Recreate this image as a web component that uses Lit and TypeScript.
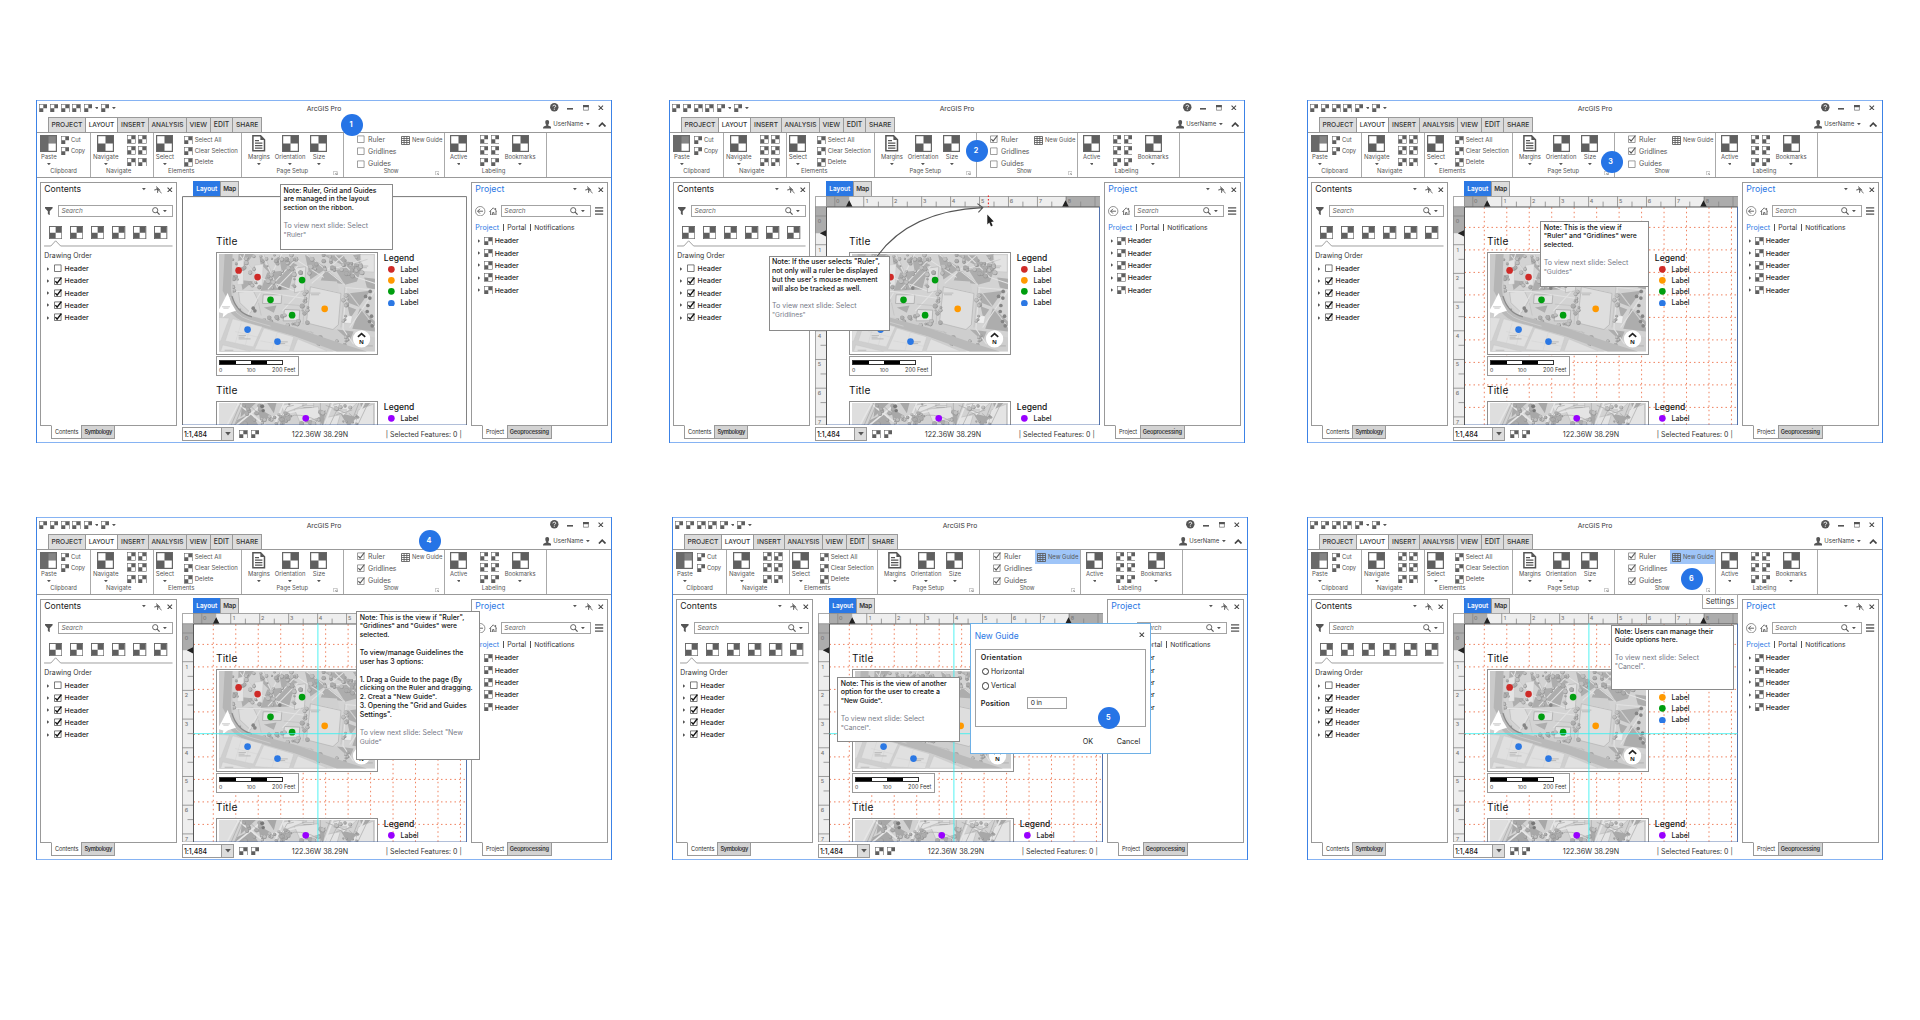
import { LitElement, html, svg, css, nothing } from "lit";
import { customElement, property } from "lit/decorators.js";
import { styleMap } from "lit/directives/style-map.js";

type Line = [string, number, boolean?];
interface Box { x: number; y: number; w: number; h: number; }
interface Slide {
  step: number;
  badge: [number, number];
  ruler: boolean;
  grid: boolean;
  guides: boolean;
  active?: boolean;
  tracking?: boolean;
  dialog?: boolean;
  settings?: boolean;
  note: Box;
  lines: Line[];
}

const place = (b: Box) =>
  styleMap({ left: `${b.x}px`, top: `${b.y}px`, width: `${b.w}px`, height: `${b.h}px` });

/** Single line of text tracked to an exact width. */
@customElement("fit-text")
export class FitText extends LitElement {
  @property() text = "";
  @property({ type: Number }) w = 0;
  static styles = css`
    :host { display: block; flex: none; white-space: nowrap; }
    .run { display: inline-block; }
  `;
  render() {
    return html`<span class="run">${this.text}</span>`;
  }
  updated() {
    if (!this.text) return;
    const run = this.renderRoot.querySelector(".run") as HTMLElement;
    run.style.letterSpacing = "0";
    run.style.fontSize = "";
    let natural = run.getBoundingClientRect().width;
    if (natural > this.w) {
      const size = parseFloat(getComputedStyle(run).fontSize);
      run.style.fontSize = `${size * Math.max(0.93, this.w / natural)}px`;
      natural = run.getBoundingClientRect().width;
    }
    run.style.letterSpacing = `${(this.w - natural) / this.text.length}px`;
    this.style.width = `${this.w}px`;
  }
}

const t = (text: string, w: number, cls = "") =>
  html`<fit-text class=${cls} .text=${text} .w=${w}></fit-text>`;

/* ---------- icons ---------- */
const checker = (cls = "sm") => html`<svg class="ck ${cls}" viewBox="0 0 17 17">
  <rect x=".6" y=".6" width="15.8" height="15.8" fill="#fff" stroke="#666" stroke-width="1.2" />
  <path d="M8.5 1H16V8.5H8.5ZM1 8.5H8.5V16H1Z" fill="#5f5f5f" />
</svg>`;
const paste = html`<svg class="ck lg" viewBox="0 0 17 17">
  <rect width="17" height="17" fill="#6a6a6a" />
  <path d="M8.5 1.2H15.8V8.5H8.5Z" fill="#858585" /><path d="M8.5 8.5H15.8V15.8H8.5Z" fill="#fff" />
</svg>`;
const caret = html`<svg class="caret" viewBox="0 0 4 2.4"><path d="M0 0H4L2 2.4Z" fill="#555" /></svg>`;
const closeX = html`<svg class="x" viewBox="0 0 6 6"><path d="M.6 .6 5.4 5.4M5.4 .6 .6 5.4" stroke="#444" stroke-width="1.1" /></svg>`;
const pin = html`<svg class="pin" viewBox="0 0 8 8">
  <path d="M2.2 .6 6.2 4.4M.3 4 2.2 3.6M3.6 6.8 3.7 5" stroke="#555" stroke-width="1" fill="none" />
  <path d="M2.6 1.4 5.4 4.1 3.7 5 2.2 3.6Z" fill="#555" /><path d="M4.6 4 7.6 7.4" stroke="#555" stroke-width=".8" />
</svg>`;
const lens = html`<svg class="lens" viewBox="0 0 8 8">
  <circle cx="3.2" cy="3.2" r="2.6" fill="none" stroke="#555" stroke-width=".9" />
  <path d="M5.1 5.1 7.6 7.6" stroke="#555" stroke-width="1.2" />
</svg>`;
const funnel = html`<svg class="funnel" viewBox="0 0 8 8.6"><path d="M0 0H8V1.2L5 4.4V8.6L3 7.2V4.4L0 1.2Z" fill="#555" /></svg>`;
const doc = html`<svg class="doc" viewBox="0 0 13.4 16.6">
  <path d="M.9 .8H8.6L12.5 4.8V15.8H.9Z" fill="#fff" stroke="#555" stroke-width="1.5" />
  <path d="M8.4 .8V5H12.5Z" fill="#555" /><path d="M3 5.6H7M3 8.2H10.4M3 10.7H10.4M3 13.2H10.4" stroke="#555" stroke-width="1.2" />
</svg>`;
const gridIcon = html`<svg class="gi" viewBox="0 0 9 9">
  <path d="M.5 .5H8.5V8.5H.5ZM.5 2.5H8.5M.5 4.5H8.5M.5 6.5H8.5M3.1 .5V8.5M5.8 .5V8.5" fill="none" stroke="#5a5a5a" stroke-width=".85" />
</svg>`;
const launcher = html`<svg class="launch" viewBox="0 0 5 5">
  <path d="M.4 .4H4.6V4.6H.4Z" fill="#fff" stroke="#999" stroke-width=".6" /><path d="M2 4.4H4.4V2M2.2 2.2 4 4" stroke="#888" stroke-width=".7" fill="none" />
</svg>`;
const help = html`<svg class="help" viewBox="0 0 9 9"><circle cx="4.5" cy="4.5" r="4.4" fill="#555" />
  <path d="M3 3.5Q3.1 2.2 4.5 2.2 6 2.2 6 3.4 6 4.1 5.1 4.5 4.5 4.8 4.5 5.5M4.5 6.2V7.1" fill="none" stroke="#fff" stroke-width=".95" /></svg>`;
const winMin = html`<svg class="wmin" viewBox="0 0 6 2"><rect width="6" height="1.6" fill="#555" /></svg>`;
const winMax = html`<svg class="wmax" viewBox="0 0 6 6"><path d="M.4 .4H5.6V5.4H.4Z" fill="#fff" stroke="#666" stroke-width=".7" /><rect width="6" height="2.3" fill="#555" /></svg>`;
const person = html`<svg class="person" viewBox="0 0 8.4 8.4"><path d="M4.2 0C5.7 0 6.2 1.1 6.1 2.4 6 3.6 5.6 4.2 5.2 4.7V5.6L7.6 6.4Q8.4 6.7 8.4 8.4H0Q0 6.7 .8 6.4L3.2 5.6V4.7C2.8 4.2 2.4 3.6 2.3 2.4 2.2 1.1 2.7 0 4.2 0Z" fill="#555" /></svg>`;
const chevron = html`<svg class="chev" viewBox="0 0 8.4 5.4"><path d="M.9 4.5 4.2 1.2 7.5 4.5" fill="none" stroke="#444" stroke-width="1.7" /></svg>`;
const back = html`<svg class="back" viewBox="0 0 10.4 10.4"><circle cx="5.2" cy="5.2" r="4.7" fill="#fff" stroke="#666" stroke-width=".7" /><path d="M8 5.2H2.6M5 2.8 2.6 5.2 5 7.6" fill="none" stroke="#555" stroke-width=".9" /></svg>`;
const home = html`<svg class="home" viewBox="0 0 8.6 8.6"><path d="M.4 4.8 4.3 .8 8.2 4.8M1.6 4V8.1H3.6V5.6H5V8.1H7V4M6.6 3V1" fill="none" stroke="#555" stroke-width=".85" /></svg>`;
const menu = html`<svg class="menu" viewBox="0 0 8.4 8"><path d="M0 .8H8.4M0 4H8.4M0 7.2H8.4" stroke="#555" stroke-width="1.4" /></svg>`;
const arrow = html`<svg class="arrow" viewBox="0 0 2.4 4"><path d="M0 0 2.4 2 0 4Z" fill="#555" /></svg>`;
const tick = (on: boolean, bold = false) => {
  const color = bold ? "#111" : "#555";
  return html`<svg class="tick" viewBox="0 0 8 8">
  <path d="M.5 .9H7.1V7.5H.5Z" fill="#fff" stroke=${bold ? "#444" : "#777"} stroke-width=".7" />
  ${on ? svg`<path d="M1.4 4.1 3.1 6.2 7.5 .5" fill="none" stroke=${color} stroke-width=${bold ? 1.4 : 1.1} />` : nothing}
</svg>`;
};

/* ---------- map artwork ---------- */
const rand = (seed: number) => () => {
  seed = (seed * 16807) % 2147483647;
  return seed / 2147483647;
};
const trees = (seed: number, zones: number[][]) => {
  const r = rand(seed);
  return zones.flatMap(([x, y, w, h, n]) =>
    Array.from({ length: n }, () => {
      const cx = x + r() * w, cy = y + r() * h, s = 3 + r() * 4.5;
      return svg`<circle cx=${cx + 1.2} cy=${cy + 1.2} r=${s} fill="#959595" /><circle cx=${cx} cy=${cy} r=${s - 1} fill=${r() > 0.5 ? "#c0c0c0" : "#adadad"} />`;
    }));
};
const parkTrees = trees(77, [
  [66, 32, 14, 110, 10], [95, 34, 35, 60, 9], [150, 32, 110, 30, 20], [165, 60, 90, 75, 15],
  [110, 100, 40, 40, 6], [295, 32, 80, 45, 16], [370, 60, 90, 40, 14], [395, 35, 50, 40, 8],
  [272, 118, 22, 90, 11], [398, 140, 14, 95, 8], [322, 272, 120, 30, 15], [150, 212, 75, 34, 7],
  [225, 230, 70, 18, 6], [240, 82, 60, 14, 6], [70, 185, 50, 40, 5],
]);
const darkTrees = [[480, 142], [466, 157], [479, 162], [473, 184], [471, 202], [484, 216], [478, 232], [486, 245], [208, 132], [128, 192], [133, 200]];

const mapOne = html`<svg class="map" viewBox="25 30 470 292" preserveAspectRatio="none">
  <rect x="25" y="30" width="470" height="292" fill="#cecece" />
  <path d="M62 30H495V280L300 240 110 215 70 160Z" fill="#d3d3d3" />
  <path d="M84 30H130L80 96ZM146 32 186 96 150 60ZM170 85 252 76 236 136 150 140ZM205 34 262 64 214 84ZM284 32 350 72 300 106ZM340 34 400 34 420 76ZM345 74 400 120 330 112ZM376 78 460 60 440 112 404 122ZM428 34 452 30 450 62ZM412 148 480 140 446 188 414 176ZM412 186 438 196 420 222ZM450 190 494 232 494 262 426 254ZM90 108 128 112 96 138ZM462 100 495 104V136L470 130ZM160 190 198 184 190 206ZM380 256 430 262 418 290Z" fill="#adadad" />
  <path d="M300 128 392 148 384 242 368 256 288 236Z" fill="#dedede" stroke="#b0b0b0" stroke-width="2" />
  <path d="M313 108 380 112 388 146 304 126Z" fill="#d0d0d0" />
  <path d="M255 72 286 68 282 140 252 146Z" fill="#e0e0e0" stroke="#aaa" stroke-width="1.5" />
  <path d="M80 52 100 46 98 120 80 122ZM132 64 158 60 154 132 130 128ZM450 32 492 32V84L456 82Z" fill="#e3e3e3" stroke="#bbb" />
  <path d="M158 152H214L212 178H156ZM222 196 268 198 266 230H218Z" fill="#e2e2e2" stroke="#a2a2a2" stroke-width="2" />
  <path d="M84 144 128 140 142 168 120 206 88 176Z" fill="#dedede" stroke="#aaa" stroke-width="1.4" />
  <path d="M400 212 426 216 422 238 398 236Z" fill="#eee" stroke="#bbb" />
  <g fill="none" stroke="#e2e2e2" stroke-width="3.2">
    <path d="M88 34 146 100 250 140M158 32 200 130 262 66M172 136 256 46 340 100M290 32 404 122M304 118 400 34M340 84 470 44M374 34 440 100 495 118M412 140 495 250M494 140 418 250M404 130 495 138M66 142 150 142 290 164M408 130 398 254 430 300M214 30 180 96M150 146 110 214M270 142 216 200M102 30 84 90" />
  </g>
  <g fill="none" stroke="#b2b2b2" stroke-width="1.3">
    <path d="M90 34 148 102M160 32 202 130M174 138 258 48M292 32 406 122M342 86 472 46M414 142 495 252M404 128 392 250M284 132 278 240M220 180 290 186M230 246 310 266M144 176 152 214M300 260 310 272" />
  </g>
  ${parkTrees}
  ${darkTrees.map(([x, y]) => svg`<circle cx=${x} cy=${y} r="5.5" fill="#858585" />`)}
  <path d="M25 30H64L66 150 44 150 25 200Z" fill="#cacaca" /><path d="M42 30H66L62 112Q58 140 66 160L46 158 36 140Z" fill="#b5b5b5" />
  <path d="M64 156Q78 206 124 216L250 250 400 300 470 322H380L250 275 110 236Q60 222 44 176Z" fill="#b9b9b9" />
  <path d="M64 156Q78 206 124 218" fill="none" stroke="#8a8a8a" stroke-width="4" /><path d="M56 168Q70 214 118 228L180 246" fill="none" stroke="#dcdcdc" stroke-width="1.5" />
  <path d="M25 208 62 216 110 238 250 276 370 322H25Z" fill="#cfcfcf" />
  <path d="M66 224 155 248 128 308 44 290ZM160 252 250 278 236 322 132 316ZM262 284 350 320H248ZM25 220 56 222 30 290 25 292ZM36 302 120 322H30Z" fill="#e0e0e0" stroke="#c2c2c2" />
  <path d="M92 236 74 296M120 243 104 304M200 266 184 320M74 262 146 280M150 290 240 306" stroke="#cacaca" fill="none" />
  <path d="M51 147 63 178 76 200 52 207 36 220 38 208 25 204 25 196 34 180Z" fill="#fff" />
  <path d="M34 188H58M38 192H54M84 274H106M84 279H102M84 284H120M200 293H232M206 298H224M42 318H68M300 147H330M302 152H326M452 66H474M456 71H470M462 305H488" stroke="#9a9a9a" stroke-width="1.6" />
</svg>`;

const mapTwo = html`<svg class="map" viewBox="275 669 470 293" preserveAspectRatio="none">
  <rect x="275" y="669" width="470" height="293" fill="#d2d2d2" />
  <path d="M275 669H330L300 735H275Z" fill="#dedede" />
  <path d="M345 669H386L340 712ZM330 720 372 700 396 740H320ZM392 684 430 706 402 736ZM420 669 448 669 440 700ZM452 716 480 700 470 740ZM570 706 596 690 588 740ZM640 700 690 712 664 740ZM700 669 730 669 706 700Z" fill="#a8a8a8" />
  <path d="M502 688 574 680 580 712 520 730ZM464 676 500 669 540 672 470 700ZM606 680 640 669 690 669 650 706ZM600 712 640 704 630 738H594ZM694 690 740 672V738H684ZM528 669H560V682H528Z" fill="#e4e4e4" stroke="#b0b0b0" stroke-width="1.5" />
  <g fill="none" stroke="#e6e6e6" stroke-width="5"><path d="M330 669 420 740M410 669 322 740M300 735 334 669M440 740 470 669M590 740 618 669M676 740 712 669M430 712 520 690" /></g>
  <g fill="none" stroke="#a6a6a6" stroke-width="2"><path d="M312 735 340 669M322 735 350 669M446 740 480 680 500 676M470 735Q480 700 520 706T570 726M580 669V740M610 669 584 740M596 676 660 700M640 669 606 740M666 700 690 720M696 669 668 740M724 669 690 740M360 669 410 716M620 690H660M628 704 676 690" /></g>
  ${trees(31, [[350, 672, 60, 60, 12], [400, 700, 70, 34, 13], [452, 672, 40, 60, 8], [560, 690, 30, 44, 6], [636, 706, 60, 26, 8], [586, 672, 110, 14, 5], [510, 718, 60, 14, 4]])}
  <circle cx="405" cy="679" r="6" fill="#777" /><circle cx="408" cy="692" r="5" fill="#777" />
  <path d="M525 676H560M530 682H554" stroke="#999" stroke-width="1.5" />
</svg>`;

const DOTS: [number, number, string][] = [
  [84, 79, "#cf2a27"], [141, 99, "#cf2a27"], [275, 108, "#009e0f"], [180, 167, "#009e0f"],
  [245, 213, "#009e0f"], [343, 194, "#ff9900"], [111, 256, "#2b78e4"], [201, 292, "#2b78e4"],
];

/* ---------- one application window ---------- */
@customElement("story-window")
export class StoryWindow extends LitElement {
  @property({ attribute: false }) slide!: Slide;

  static styles = css`
    :host { display: block; position: relative; width: 576px; height: 343px; background: #fff; color: #333;
      font: 400 7px/9px Inter, "Open Sans", sans-serif; flex: none;
      box-shadow: inset 1px 0 #3c82e6, inset -1px 0 #3c82e6, inset 0 1px #86b3f3, inset 0 -1px #86b3f3; }
    svg { display: block; flex: none; }
    .window { display: flex; flex-direction: column; height: 343px; }
    .row { display: flex; align-items: center; }
    .lg { width: 17px; height: 17px; } .sm { width: 8.6px; height: 8.6px; } .md { width: 13.3px; height: 13.3px; }
    .caret { width: 3.8px; height: 2.3px; } .x { width: 5.6px; height: 5.6px; } .pin { width: 8px; height: 8px; }
    .lens { width: 8px; height: 8px; } .funnel { width: 7.6px; height: 8.4px; } .doc { width: 13.4px; height: 16.6px; margin: 0 0 .4px; }
    .gi { width: 9px; height: 9px; } .launch { width: 4.6px; height: 4.6px; } .help { width: 8.6px; height: 8.6px; }
    .wmin { width: 6px; height: 2px; margin: 2px 10.4px 0 7.7px; } .wmax { width: 5.8px; height: 5.8px; margin-right: 9.6px; }
    .person { width: 8.4px; height: 8.4px; } .chev { width: 8.4px; height: 5.4px; margin-left: 8px; }
    .back { width: 10.4px; height: 10.4px; } .home { width: 8.6px; height: 8.6px; } .menu { width: 8.2px; height: 8px; }
    .arrow { width: 2.2px; height: 4px; } .tick { width: 8px; height: 8px; }

    .titlebar { display: grid; grid-template-columns: 1fr auto 1fr; align-items: center; height: 17.3px; padding: 0 8px 0 2.5px; box-sizing: border-box; }
    .quick { display: flex; align-items: center; gap: 2.7px; margin-top: -1px; }
    .quick .caret { margin: 0 -.2px 0 -.4px; }
    .titlebar .app { font-size: 7.2px; margin-left: 5.5px; margin-top: -.6px; }
    .wctl { display: flex; align-items: center; justify-content: flex-end; margin-top: -2px; }
    .tabs { display: flex; height: 14.4px; padding-left: 12.3px; }
    .tab { display: flex; align-items: center; justify-content: center; box-sizing: border-box; border: 1px solid #999; border-left-width: 0; border-bottom: 0; background: #dcdcdc; font-size: 7px; font-weight: 500; color: #333; height: 14.4px; }
    .tab:first-child { border-left-width: 1px; }
    .tab.on { background: #fff; }
    .user { display: flex; align-items: center; margin-left: auto; padding-right: 6px; font-size: 6.4px; color: #444; }
    .user fit-text { margin: 0 2.5px 0 2px; }

    .ribbon { display: flex; height: 46px; box-sizing: border-box; border-top: 1px solid #999; border-bottom: 1px solid #999; margin: 0 1px 0 1px; color: #555; font-size: 6.3px; }
    .group { display: flex; flex-direction: column; box-sizing: border-box; border-right: 1px solid #aaa; padding-top: 2.5px; height: 44px; flex: none; }
    .tools { display: flex; height: 32px; align-items: flex-start; }
    .tool { display: flex; flex-direction: column; align-items: center; }
    .tool fit-text { margin: .4px 0 1.8px; line-height: 8.6px; }
    .caption { display: flex; align-items: center; justify-content: space-between; height: 8px; line-height: 8px; }
    .caption .launch { margin: 3.5px 4.6px 0 0; }
    .stack { display: flex; flex-direction: column; gap: 2.7px; padding-top: .4px; }
    .stack .row { gap: 1.8px; height: 8.6px; }
    .six { display: grid; grid-template-columns: 8.6px 8.6px; gap: 2.6px; }
    .clip { width: 53.7px; padding-left: 3.3px; } .clip .stack { margin-left: 3.3px; } .clip .caption { padding-left: 10px; }
    .navi { width: 63px; padding-left: 2.2px; } .navi .six { margin-left: 8.7px; } .navi .caption { padding-left: 13px; }
    .elem { width: 88.4px; padding-left: 2px; } .elem .stack { margin-left: 10.3px; } .elem .caption { padding-left: 12.4px; }
    .setup { width: 101.6px; padding-left: 6px; } .setup .tools { gap: 5px; } .setup .caption { padding-left: 28.3px; }
    .show { width: 101.4px; padding-left: 13.2px; } .show .caption { padding-left: 26.8px; }
    .lab { width: 101.6px; padding-left: 5px; } .lab .six { margin: 0 5.4px 0 12.6px; } .lab .caption { padding-left: 31.6px; }
    .checks { display: flex; flex-direction: column; gap: 3.3px; font-size: 7.4px; width: 42.3px; margin-top: -.5px; flex: none; }
    .checks .row { gap: 3.2px; height: 9px; }
    .new { display: flex; align-items: center; gap: 1.8px; height: 14px; width: 45px; box-sizing: border-box; padding-left: 2.2px; margin: -1.8px 0 0 -.2px; flex: none; }
    .new.on { background: #9fc5f8; }

    .body { display: flex; padding-left: 4.3px; gap: 4.7px; height: 265px; }
    .side { width: 136.6px; padding-top: 4px; flex: none; }
    .panel { box-sizing: border-box; height: 244.3px; border: 1px solid #999; padding: 0 3.4px 0 2.9px; }
    .head { display: flex; align-items: center; height: 13.4px; font-size: 8.8px; color: #222; }
    .head .caret { margin-left: auto; } .head .pin { margin: 1px 5px 0 8px; }
    .head.blue, .blue { color: #2b78e4; }
    .find { display: flex; align-items: center; height: 12px; margin-top: 9px; }
    .box { display: flex; align-items: center; box-sizing: border-box; border: 1px solid #a3a3a3; height: 12.4px; padding: 0 5px 0 2.6px; font-style: italic; color: #666; font-size: 6.8px; }
    .box .lens { margin: 0 2.8px 0 auto; }
    .side.left .box { width: 114.8px; margin-left: 5px; } .side.left .funnel { margin-left: 1px; }
    .pick { display: flex; gap: 7.8px; padding: 9px 0 0 4.8px; }
    .notch { width: 128.6px; height: 7.6px; }
    .cap { font-size: 7.2px; margin-top: 3.8px; }
    .list { display: flex; flex-direction: column; }
    .item { display: flex; align-items: center; height: 12.3px; font-size: 7.1px; font-weight: 500; color: #222; }
    .left .list { margin-top: 2.6px; padding-left: 3px; } .left .item .tick { margin: -.6px 2.8px 0 4.4px; }
    .right .list { margin-top: 3px; padding-left: 3.2px; } .right .item .sm { margin: 0 2.1px 0 3.4px; }
    .right .home { margin: 0 3.5px 0 3px; } .right .box { width: 91.4px; margin-right: 4.6px; }
    .links { display: flex; align-items: center; gap: 3.6px; height: 9px; margin-top: 5.6px; font-size: 7.1px; }
    .bar { width: .8px; height: 7px; background: #555; }
    .foot { display: flex; padding-left: 11px; margin-top: -1px; }
    .foot div { box-sizing: border-box; display: flex; align-items: center; justify-content: center; height: 13.6px; border: 1px solid #999; font-size: 6.1px; font-weight: 600; background: #d3d3d3; }
    .foot .on { background: #fff; border-top-color: #fff; border-right: 0; font-weight: 400; }
    .center { width: 285.1px; padding-top: 3.8px; flex: none; }
    .views { display: flex; padding-left: 11.9px; height: 14.2px; font-size: 6.8px; font-weight: 600; }
    .views div { display: flex; align-items: center; justify-content: center; box-sizing: border-box; background: #dcdcdc; border: 1px solid #999; border-bottom: 0; width: 19px; }
    .views .on { background: #2b78e4; color: #fff; border: 0; width: 26.7px; }
    .canvas { position: relative; overflow: hidden; height: 229.6px; box-sizing: border-box; }
    .under, .over { position: absolute; left: 0; top: 0; width: 285.1px; height: 229.6px; }
    .doc-page { position: relative; padding: 38px 0 0 34px; }
    .ttl { font-size: 10.2px; line-height: 14px; height: 14px; color: #111; margin-left: .4px; }
    .figure { display: flex; margin-top: 3.9px; }
    .frame { position: relative; box-sizing: border-box; width: 162.6px; height: 103px; border: 1px solid #8f8f8f; padding: 1.8px 2.3px; background: #fff; }
    .map { width: 156.2px; height: 97.6px; }
    .pins { position: absolute; left: 2.3px; top: 1.8px; width: 156.2px; height: 97.6px; }
    .n { font: 700 18px "Open Sans", sans-serif; fill: #222; }
    .legend { margin: 2px 0 0 5.7px; font-size: 7.2px; font-weight: 500; color: #222; }
    .legend .lh { font-size: 8.6px; height: 9px; margin-bottom: 1.4px; font-weight: 500; color: #111; }
    .key { display: flex; align-items: center; height: 11.15px; gap: 5.6px; padding-left: 4.4px; }
    .key svg { width: 6.7px; height: 6.7px; }
    .scale { box-sizing: border-box; width: 83.8px; height: 20px; border: 1px solid #999; margin: 1.2px 0 6.9px; padding: 2.8px 2.4px; background: #fff; }
    .bars { display: grid; grid-template-columns: 15.8px 15.7px 15.7px 17px; height: 5.3px; width: 64.2px; box-sizing: border-box; border: .7px solid #333; }
    .bars i:nth-child(odd) { background: #000; }
    .nums { display: flex; font-size: 5.6px; line-height: 8px; margin-top: 1.2px; }
    .nums fit-text:nth-child(2) { margin: 0 16.6px 0 24.6px; }
    .status { display: flex; align-items: center; height: 13.2px; margin-top: 2.2px; font-size: 7.4px; gap: 2.6px; }
    .combo { display: flex; box-sizing: border-box; width: 52.2px; height: 13.2px; border: 1px solid #999; align-items: center; justify-content: space-between; padding-left: 1.4px; margin-right: 3px; font-weight: 500; color: #111; }
    .drop { display: flex; align-items: center; justify-content: center; width: 10.4px; height: 11.2px; background: #dcdcdc; border-left: 1px solid #999; }
    .drop .caret { width: 6px; height: 3.4px; }
    .coord { margin-left: 30px; } .sel { margin-left: 35px; }

    .note, .badge, .dialog, .settings, .track { position: absolute; box-sizing: border-box; }
    .note { background: #fff; border: 1px solid #8a8a8a; padding: 1.6px 0 0 2.5px; color: #111; font-size: 7.2px; line-height: 8.86px; font-weight: 500; }
    .note fit-text { height: 8.86px; }
    .note .hint { color: #777a88; font-weight: 400; }
    .badge { width: 22px; height: 22px; border-radius: 50%; background: #2674e6; color: #fff; display: flex; align-items: center; justify-content: center; font-size: 7.2px; font-weight: 700; padding-bottom: 1px; padding-right: 2px; }
    .track { left: 0; top: 0; width: 576px; height: 343px; }
    .settings { left: 394.7px; top: 77.3px; width: 36.4px; height: 15px; background: #fff; border: 1px solid #a8a8a8; display: flex; align-items: center; justify-content: center; font-size: 7.4px; }
    .dialog { left: 297.5px; top: 106px; width: 181.4px; height: 130.6px; background: #fff; border: 1px solid #6eb0e6; padding: 6px 4.2px 0; font-size: 7.2px; color: #222; }
    .dhead { display: flex; justify-content: space-between; align-items: center; height: 11px; font-size: 8.8px; }
    .dhead .x { margin: -2px 1.2px 0 0; }
    .dbox { box-sizing: border-box; height: 78.4px; margin-top: 8px; border: 1px solid #a0a0a0; padding: 1.8px 0 0 5px; }
    .dbox .row { height: 14.8px; gap: 1.4px; } .dbox .first { height: 12px; } .dbox .pos { height: 19.6px; gap: 17.6px; }
    .b { font-weight: 600; }
    .radio { width: 5.4px; height: 5.4px; border: 1px solid #333; border-radius: 50%; box-sizing: content-box; margin: 0 .3px 0 1.2px; flex: none; }
    .input { box-sizing: border-box; width: 39.7px; height: 12.6px; border: 1px solid #a0a0a0; display: flex; align-items: center; padding-left: 2.4px; }
    .acts { display: flex; justify-content: flex-end; gap: 23.4px; padding: 9.2px 5.6px 0 0; }
  `;

  private big(icon: unknown, label: string, w: number) {
    return html`<div class="tool">${icon}${t(label, w)}${caret}</div>`;
  }
  private small(label: string, w: number) {
    return html`<div class="row">${checker()}${t(label, w)}</div>`;
  }
  private six = () => html`<div class="six">${Array.from({ length: 6 }, () => checker())}</div>`;

  private ruler() {
    const s = this.slide;
    const grid: unknown[] = [];
    if (s.grid) {
      for (let i = 0; i < 12; i++) grid.push(svg`<path d="M${176.8 + i * 22.47} 107V325" />`);
      for (let i = 0; i < 9; i++) grid.push(svg`<path d="M157 ${127.1 + i * 22.5}H430" />`);
    }
    if (!s.ruler) {
      return html`<svg class="under" viewBox="145.5 95.7 285.1 229.6">
        <path d="M146 325V96.3H430.1V325" fill="#fff" stroke="#777" stroke-width="1" />
      </svg>`;
    }
    const nums = [0, 1, 2, 3, 4, 5, 6, 7, 8];
    return html`<svg class="under" viewBox="145.5 95.7 285.1 229.6">
      <rect x="145.5" y="95.7" width="285.1" height="229.6" fill="#fff" />
      <rect x="157" y="95.7" width="273.6" height="11" fill="#eee" />
      <path d="M157 95.7H179.7V106.7H157ZM396 95.7H430.6V106.7H396ZM145.5 106.7H157V133.3H145.5Z" fill="#acacac" />
      <rect x="145.5" y="133.3" width="11.5" height="192" fill="#eee" />
      <g stroke="#888" stroke-width=".8" fill="none">
        <path d="M145.9 325V96.1H430.6M145.5 106.4H157M157 96V106M145.5 324.8H157M425.5 96V106.4" />
        ${nums.map((i) => svg`<path d="M${165.3 + i * 28.95} 96V106.4" />`)}
        ${nums.map((i) => i ? svg`<path d="M${180 + i * 28.9} 101.3V106.4" />` : nothing)}
        ${nums.slice(0, 8).map((i) => svg`<path d="M145.7 ${115.7 + i * 28.7}H157" />`)}
        ${nums.slice(1, 7).map((i) => svg`<path d="M151 ${130.4 + i * 28.65}H157" />`)}
      </g>
      <g font-family="Inter, sans-serif" font-size="5.4" font-weight="500" fill="#777" text-anchor="middle">
        ${nums.map((i) => svg`<text x=${168.3 + i * 28.95} y="103">${i}</text>`)}
        ${nums.slice(0, 8).map((i) => svg`<text x="150" y=${122.7 + i * 28.7}>${i}</text>`)}
      </g>
      <path d="M179.7 100 183 106.4H176.4ZM396 100 399.3 106.4H392.7ZM150.3 133 157 129.6V136.4Z" fill="#222" />
      <g stroke="#ef7f5c" stroke-width="1" stroke-dasharray="1.5 3" fill="none">${grid}</g>
      <path d="M157 325V106.7H430" fill="none" stroke="#555" stroke-width="1" />
      <path d="M430.1 106.5V325" stroke="#4467a5" stroke-width="1" />
    </svg>`;
  }

  private keyRow(color: string) {
    return html`<div class="key"><svg viewBox="0 0 8 8"><circle cx="4" cy="4" r="4" fill=${color} /></svg>${t("Label", 18)}</div>`;
  }

  private page() {
    return html`<div class="doc-page">
      ${t("Title", 21.6, "ttl")}
      <div class="figure">
        <div class="frame">${mapOne}
          <svg class="pins" viewBox="25 30 470 292" preserveAspectRatio="none">
            ${DOTS.map(([x, y, c]) => svg`<circle cx=${x} cy=${y} r="10" fill=${c} />`)}
            <circle cx="454" cy="284" r="26" fill="#fff" />
            <path d="M443 278 454 268 465 278" fill="none" stroke="#222" stroke-width="5" />
            <text class="n" x="454" y="298" text-anchor="middle">N</text>
          </svg>
        </div>
        <div class="legend">${t("Legend", 30.4, "lh")}
          ${["#cf2a27", "#ff9900", "#009e0f", "#2b78e4"].map((c) => this.keyRow(c))}
        </div>
      </div>
      <div class="scale">
        <div class="bars"><i></i><i></i><i></i><i></i></div>
        <div class="nums">${t("0", 3.2)}${t("100", 8.7)}${t("200 Feet", 23.4)}</div>
      </div>
      ${t("Title", 21.6, "ttl")}
      <div class="figure">
        <div class="frame">${mapTwo}
          <svg class="pins" viewBox="275 669 470 293" preserveAspectRatio="none"><circle cx="536" cy="715" r="10" fill="#9900ff" /></svg>
        </div>
        <div class="legend">${t("Legend", 30.4, "lh")}${this.keyRow("#9900ff")}</div>
      </div>
    </div>`;
  }

  private header(left: boolean, label: string, w: number) {
    return html`<div class="head ${left ? "" : "blue"}">${t(label, w)}${caret}${pin}${closeX}</div>`;
  }

  render() {
    const s = this.slide;
    return html`<div class="window">
      <div class="titlebar">
        <div class="quick">${[1, 2, 3, 4, 5].map(() => checker())}${caret}${checker()}${caret}</div>
        ${t("ArcGIS Pro", 34.6, "app")}
        <div class="wctl">${help}${winMin}${winMax}${closeX}</div>
      </div>
      <div class="tabs">
        ${([["PROJECT", 31, 37.3], ["LAYOUT", 25.4, 32.5], ["INSERT", 24, 31], ["ANALYSIS", 32, 37.7], ["VIEW", 17.5, 24], ["EDIT", 15.5, 22.6], ["SHARE", 22.4, 28.5]] as [string, number, number][])
          .map(([n, w, full], i) => html`<div class="tab ${i === 1 ? "on" : ""}" style=${styleMap({ width: `${full}px` })}>${t(n, w)}</div>`)}
        <div class="user">${person}${t("UserName", 30)}${caret}${chevron}</div>
      </div>
      <div class="ribbon">
        <div class="group clip">
          <div class="tools">${this.big(paste, "Paste", 15.7)}<div class="stack">${this.small("Cut", 9.7)}${this.small("Copy", 14)}</div></div>
          <div class="caption">${t("Clipboard", 26.6)}</div>
        </div>
        <div class="group navi">
          <div class="tools">${this.big(checker("lg"), "Navigate", 25.6)}${this.six()}</div>
          <div class="caption">${t("Navigate", 25.4)}</div>
        </div>
        <div class="group elem">
          <div class="tools">${this.big(checker("lg"), "Select", 18.3)}
            <div class="stack">${this.small("Select All", 26.7)}${this.small("Clear Selection", 43.2)}${this.small("Delete", 18.6)}</div></div>
          <div class="caption">${t("Elements", 26.4)}</div>
        </div>
        <div class="group setup">
          <div class="tools">${this.big(doc, "Margins", 21.6)}${this.big(checker("lg"), "Orientation", 30.7)}${this.big(checker("lg"), "Size", 12.3)}</div>
          <div class="caption">${t("Page Setup", 31.7)}${launcher}</div>
        </div>
        <div class="group show">
          <div class="tools">
            <div class="checks">
              <div class="row">${tick(s.ruler)}${t("Ruler", 17)}</div>
              <div class="row">${tick(s.grid)}${t("Gridlines", 28.4)}</div>
              <div class="row">${tick(s.guides)}${t("Guides", 23)}</div>
            </div>
            <div class="new ${s.active ? "on" : ""}">${gridIcon}${t("New Guide", 30.4)}</div>
          </div>
          <div class="caption">${t("Show", 14.7)}${launcher}</div>
        </div>
        <div class="group lab">
          <div class="tools">${this.big(checker("lg"), "Active", 17)}${this.six()}${this.big(checker("lg"), "Bookmarks", 30.6)}</div>
          <div class="caption">${t("Labeling", 23.7)}</div>
        </div>
      </div>
      <div class="body">
        <div class="side left">
          <div class="panel">
            ${this.header(true, "Contents", 37)}
            <div class="find">${funnel}<div class="box">${t("Search", 21.3)}${lens}${caret}</div></div>
            <div class="pick">${[1, 2, 3, 4, 5, 6].map(() => checker("md"))}</div>
            <svg class="notch" viewBox="0 0 128.6 7.6"><path d="M0 7H6.8L11.6 1.8 16.6 7H128.6" fill="none" stroke="#888" stroke-width=".8" /></svg>
            ${t("Drawing Order", 47.7, "cap")}
            <div class="list">
              ${[false, true, true, true, true].map((on) => html`<div class="item">${arrow}${tick(on, true)}${t("Header", 24)}</div>`)}
            </div>
          </div>
          <div class="foot"><div class="on" style="width:29.6px">${t("Contents", 23.4)}</div><div style="width:34.6px">${t("Symbology", 27.4)}</div></div>
        </div>
        <div class="center">
          <div class="views"><div class="on">${t("Layout", 21)}</div><div>${t("Map", 13)}</div></div>
          <div class="canvas">
            ${this.ruler()}
            ${this.page()}
            <svg class="over" viewBox="145.5 95.7 285.1 229.6">
              ${s.guides ? svg`<path d="M281.4 106V325M157 216.4H430" stroke="#3ff0f0" stroke-width=".9" />` : nothing}
              <path d=${s.ruler ? "M157 324.8H430.6" : "M145.5 324.8H430.6"} stroke="#3f62a3" stroke-width="1" />
            </svg>
          </div>
          <div class="status">
            <div class="combo">${t("1:1,484", 23)}<div class="drop">${caret}</div></div>
            ${checker()}${checker()}
            ${t("122.36W 38.29N", 56.4, "coord")}${t("| Selected Features: 0 |", 76, "sel")}
          </div>
        </div>
        <div class="side right">
          <div class="panel">
            ${this.header(false, "Project", 29)}
            <div class="find">${back}${home}<div class="box">${t("Search", 21.3)}${lens}${caret}</div>${menu}</div>
            <div class="links">${t("Project", 24, "blue")}<i class="bar"></i>${t("Portal", 19)}<i class="bar"></i>${t("Notifications", 40.4)}</div>
            <div class="list">${[1, 2, 3, 4, 5].map(() => html`<div class="item">${arrow}${checker()}${t("Header", 24)}</div>`)}</div>
          </div>
          <div class="foot"><div class="on" style="width:24.4px">${t("Project", 18)}</div><div style="width:45px">${t("Geoprocessing", 39)}</div></div>
        </div>
      </div>
    </div>
    ${s.tracking ? html`<svg class="track" viewBox="0 0 576 343">
      <path d="M319.4 95.4V107" stroke="#e22" stroke-width="1.1" stroke-dasharray="1.6 2" />
      <path d="M208.3 156Q241 111 313.4 107.6M308.4 103.6 313.8 107.6 309.4 112.4" fill="none" stroke="#555" stroke-width="1.1" />
      <path d="M318.3 114.4V124.4L320.3 122.6 322 126.4 323.7 125.6 322.1 121.9 324.8 121.6Z" fill="#222" />
    </svg>` : nothing}
    <div class="note" style=${place(s.note)}>${s.lines.map(([x, w, hint]) => x ? t(x, w, hint ? "hint" : "") : html`<fit-text></fit-text>`)}</div>
    ${s.settings ? html`<div class="settings">${t("Settings", 28.4)}</div>` : nothing}
    ${s.dialog ? html`<div class="dialog">
      <div class="dhead">${t("New Guide", 44, "blue")}${closeX}</div>
      <div class="dbox">
        <div class="row first">${t("Orientation", 41.4, "b")}</div>
        <div class="row"><i class="radio"></i>${t("Horizontal", 33.2)}</div>
        <div class="row"><i class="radio"></i>${t("Vertical", 25)}</div>
        <div class="row pos">${t("Position", 29, "b")}<div class="input">${t("0 in", 11)}</div></div>
      </div>
      <div class="acts">${t("OK", 10.6)}${t("Cancel", 23.4)}</div>
    </div>` : nothing}
    <div class="badge" style=${styleMap({ left: `${s.badge[0] - 11}px`, top: `${s.badge[1] - 11}px` })}>${s.step}</div>`;
  }
}

const SLIDES: Slide[] = [
  { step: 1, badge: [316, 25], ruler: false, grid: false, guides: false, note: { x: 244, y: 84, w: 112.6, h: 66 },
    lines: [["Note: Ruler, Grid and Guides", 93], ["are managed in the layout", 85.7], ["section on the ribbon.", 70.3], ["", 0], ["To view next slide: Select", 84.6, true], ["\"Ruler\"", 22.7, true]] },
  { step: 2, badge: [308, 50.7], ruler: true, grid: false, guides: false, tracking: true, note: { x: 99.5, y: 155.5, w: 121, h: 75 },
    lines: [["Note: If the user selects \"Ruler\",", 108], ["not only will a ruler be displayed", 105.7], ["but the user's mouse movement", 105.7], ["will also be tracked as well.", 89.3], ["", 0], ["To view next slide: Select", 84.6, true], ["\"Gridlines\"", 33.7, true]] },
  { step: 3, badge: [304.5, 61.6], ruler: true, grid: true, guides: false, note: { x: 233.2, y: 121, w: 109, h: 65.6 },
    lines: [["Note: This is the view if", 78], ["\"Ruler\" and \"Gridlines\" were", 93], ["selected.", 30], ["", 0], ["To view next slide: Select", 84.6, true], ["\"Guides\"", 28.5, true]] },
  { step: 4, badge: [394, 24.4], ruler: true, grid: true, guides: true, note: { x: 320.2, y: 94, w: 123.4, h: 149 },
    lines: [["Note: This is the view if \"Ruler\",", 104.7], ["\"Gridlines\" and \"Guides\" were", 97.3], ["selected.", 29.7], ["", 0], ["To view/manage Guidelines the", 103.7], ["user has 3 options:", 63.7], ["", 0],
      ["1. Drag a Guide to the page (By", 102.3], ["clicking on the Ruler and dragging.", 113], ["2. Creat a \"New Guide\".", 77.3], ["3. Opening the \"Grid and Guides", 107], ["Settings\".", 32.3], ["", 0], ["To view next slide: Select \"New", 103.3, true], ["Guide\"", 22, true]] },
  { step: 5, badge: [437.3, 201], ruler: true, grid: true, guides: true, active: true, dialog: true, note: { x: 165.2, y: 160, w: 123, h: 64.6 },
    lines: [["Note: This is the view of another", 106], ["option for the user to create a", 99.3], ["\"New Guide\".", 41.7], ["", 0], ["To view next slide: Select", 83.7, true], ["\"Cancel\".", 30, true]] },
  { step: 6, badge: [385.3, 62.3], ruler: true, grid: true, guides: true, active: true, settings: true, note: { x: 304.2, y: 108, w: 123, h: 65.4 },
    lines: [["Note: Users can manage their", 98.7], ["Guide options here.", 63], ["", 0], ["To view next slide: Select", 84.3, true], ["\"Cancel\".", 30.3, true]] },
];

@customElement("app-root")
export class AppRoot extends LitElement {
  static styles = css`
    :host { display: block; width: 1920px; height: 1020px; background: #fff; overflow: hidden; }
    .board { display: flex; flex-direction: column; gap: 74px; padding: 100px 0 0 36px; }
    .strip { display: grid; }
    .top { grid-template-columns: 633px 638px 576px; }
    .bottom { grid-template-columns: 636px 635px 576px; }
  `;
  render() {
    const w = (s: Slide) => html`<story-window .slide=${s}></story-window>`;
    return html`<div class="board">
      <div class="strip top">${SLIDES.slice(0, 3).map(w)}</div>
      <div class="strip bottom">${SLIDES.slice(3).map(w)}</div>
    </div>`;
  }
}
